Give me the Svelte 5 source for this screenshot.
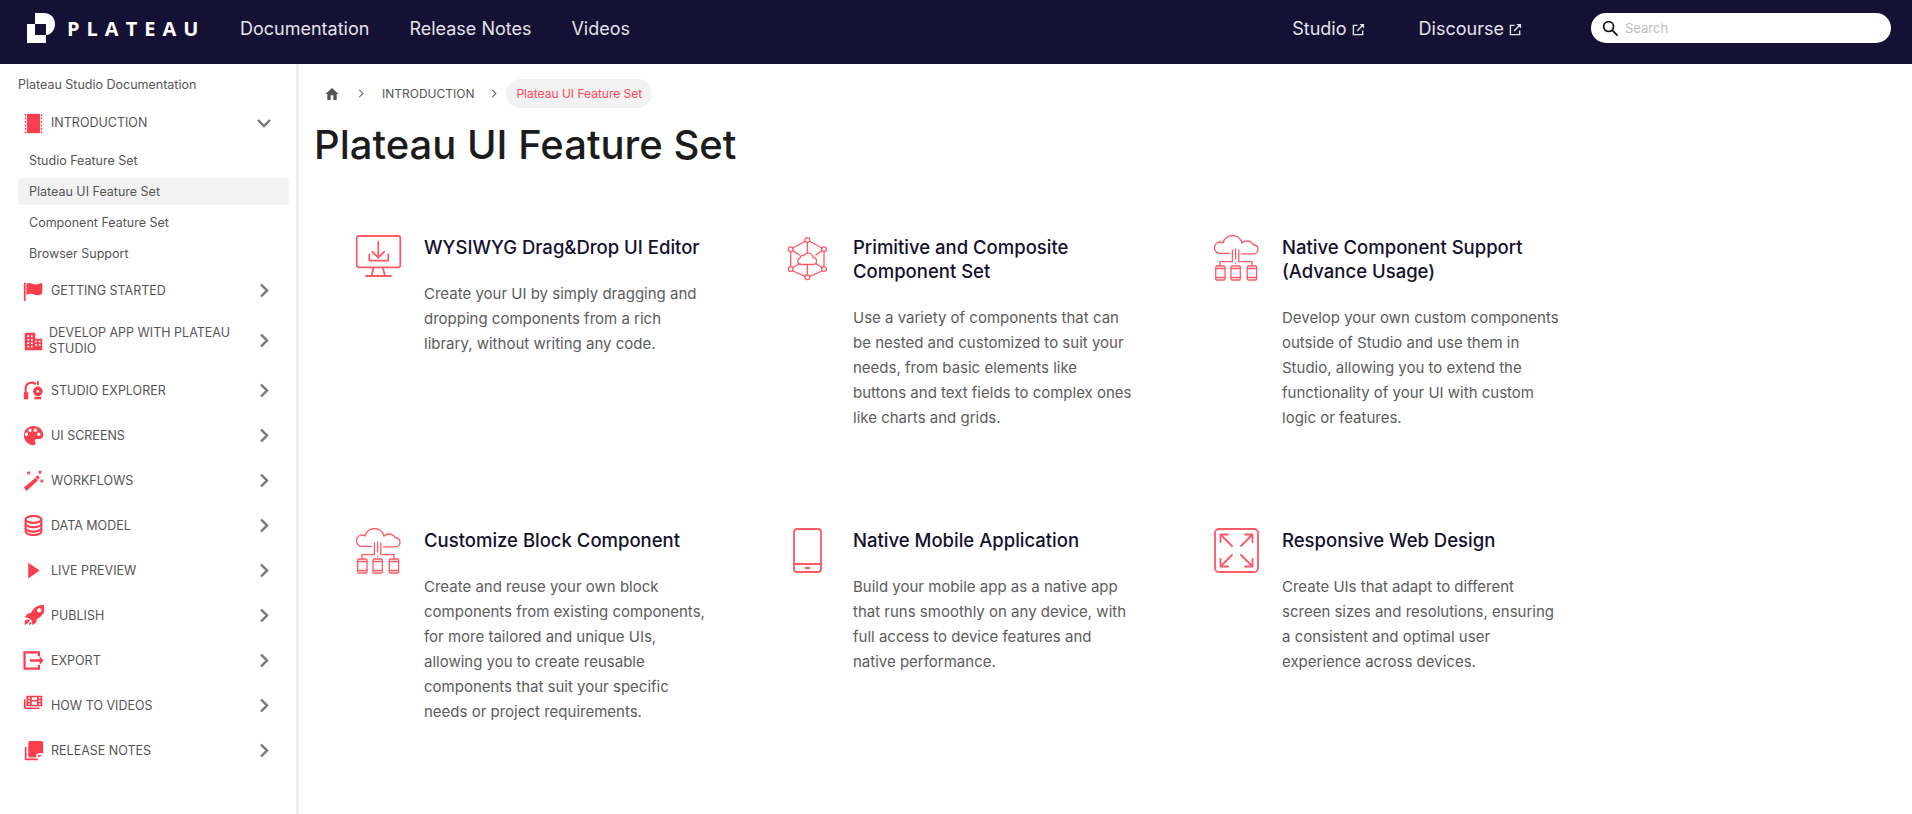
<script>
  const nav = ['Documentation', 'Release Notes', 'Videos'];
  const subItems = ['Studio Feature Set', 'Plateau UI Feature Set', 'Component Feature Set', 'Browser Support'];

  const sections = [
    { id: 'flag', label: 'GETTING STARTED' },
    { id: 'building', label: 'DEVELOP APP WITH PLATEAU STUDIO', tall: true },
    { id: 'headset', label: 'STUDIO EXPLORER' },
    { id: 'palette', label: 'UI SCREENS' },
    { id: 'wand', label: 'WORKFLOWS' },
    { id: 'database', label: 'DATA MODEL' },
    { id: 'play', label: 'LIVE PREVIEW' },
    { id: 'rocket', label: 'PUBLISH' },
    { id: 'export', label: 'EXPORT' },
    { id: 'videos', label: 'HOW TO VIDEOS' },
    { id: 'notes', label: 'RELEASE NOTES' }
  ];

  const features = [
    {
      icon: 'monitor',
      title: 'WYSIWYG Drag&Drop UI Editor',
      body: 'Create your UI by simply dragging and dropping components from a rich library, without writing any code.'
    },
    {
      icon: 'hex',
      title: 'Primitive and Composite Component Set',
      body: 'Use a variety of components that can be nested and customized to suit your needs, from basic elements like buttons and text fields to complex ones like charts and grids.'
    },
    {
      icon: 'cloud',
      title: 'Native Component Support (Advance Usage)',
      body: 'Develop your own custom components outside of Studio and use them in Studio, allowing you to extend the functionality of your UI with custom logic or features.'
    },
    {
      icon: 'cloud',
      title: 'Customize Block Component',
      body: 'Create and reuse your own block components from existing components, for more tailored and unique UIs, allowing you to create reusable components that suit your specific needs or project requirements.'
    },
    {
      icon: 'phone',
      title: 'Native Mobile Application',
      body: 'Build your mobile app as a native app that runs smoothly on any device, with full access to device features and native performance.'
    },
    {
      icon: 'expand',
      title: 'Responsive Web Design',
      body: 'Create UIs that adapt to different screen sizes and resolutions, ensuring a consistent and optimal user experience across devices.'
    }
  ];
</script>

{#snippet external()}
  <svg class="ext" viewBox="0 0 14 14" width="13" height="13" fill="none" stroke="currentColor" stroke-width="1.5">
    <path d="M6 2.500H1.500v10h10V8" />
    <path d="M5.500 8.500 12 2" />
    <path d="M8 1h5v5z" fill="currentColor" stroke="none" />
  </svg>
{/snippet}

{#snippet chevron()}
  <svg class="chev" viewBox="0 0 11 15" width="11" height="15" fill="none" stroke="#757575" stroke-width="2.400">
    <path d="M2 1.500l6 6-6 6" />
  </svg>
{/snippet}

{#snippet sideIcon(id)}
  <svg class="side-icon" viewBox="0 0 24 24" width="24" height="24" fill="#fa3e4e">
    {#if id === 'film'}
      <path d="M4.500 1h15v22h-15z" />
      <path d="M2 1h1.600v2H2zM2 5h1.600v2H2zM2 9h1.600v2H2zM2 13h1.600v2H2zM2 17h1.600v2H2zM2 21h1.600v2H2zM20.400 1H22v2h-1.600zM20.400 5H22v2h-1.600zM20.400 9H22v2h-1.600zM20.400 13H22v2h-1.600zM20.400 17H22v2h-1.600zM20.400 21H22v2h-1.600z" />
    {:else if id === 'flag'}
      <path d="M1 3h2v21H1z" />
      <path d="M4 4c4-2 7 1 10 1s5-1 8-2v13c-3 1-5 2-8 1S8 15 4 17z" />
    {:else if id === 'building'}
      <path fill-rule="evenodd" d="M2 3h12v7h8v13H2zM5 6v2h2V6zm4 0v2h2V6zM5 10v2h2v-2zm4 0v2h2v-2zm5 2v2h2v-2zm4 0v2h2v-2zM5 14v2h2v-2zm4 0v2h2v-2zm5 2v2h2v-2zm4 0v2h2v-2zM5 18v2h2v-2zm4 0v2h2v-2z" />
    {:else if id === 'headset'}
      <path d="M1 14h5v8H1z" />
      <path fill="none" stroke="#fa3e4e" stroke-width="2.400" d="M3 15V10a7 7 0 0 1 12-5" />
      <circle cx="17" cy="13" r="5.500" />
      <circle cx="17" cy="13" r="1.600" fill="#fff" />
      <path d="M13 19h8v3h-8zM16 1h2v5h-2z" />
    {:else if id === 'palette'}
      <path fill-rule="evenodd" d="M12 1C5 1 1 6 1 12s5 11 11 11c2.500 0 3-2 2-3.500s-.5-3.500 2-3.500h3c2.500 0 4-2 4-5 0-6-5-10-11-10zM6 10.500a2 2 0 1 0 0 .1zM10 6a2 2 0 1 0 0 .1zM16 6a2 2 0 1 0 0 .1zM20 10.500a2 2 0 1 0 0 .1z" />
    {:else if id === 'wand'}
      <path d="M1 20 14 9l3 3L4 24z" />
      <path d="M14 8l3-2 2 3-2 2z" />
      <path fill="none" stroke="#fa3e4e" stroke-width="1.300" d="M5 2l3 3M8 2 5 5M18 1l3 3M21 1l-3 3M20 11l3 3M23 11l-3 3" />
    {:else if id === 'database'}
      <path d="M3 5c0-2 4-4 9-4s9 2 9 4-4 4-9 4-9-2-9-4z" fill="none" stroke="#fa3e4e" stroke-width="2.400" />
      <path d="M3 5v14c0 2 4 4 9 4s9-2 9-4V5" fill="none" stroke="#fa3e4e" stroke-width="2.400" />
      <path d="M3 10c0 2 4 4 9 4s9-2 9-4M3 15c0 2 4 4 9 4s9-2 9-4" fill="none" stroke="#fa3e4e" stroke-width="2.400" />
    {:else if id === 'play'}
      <path d="M6 3l13 9-13 9z" />
    {:else if id === 'rocket'}
      <path d="M23 0c-6 0-11 3-14 9l-4 1-3 4 5 1 3 3 1 5 4-3 1-4c6-3 9-8 10-14zM16 6a2.500 2.500 0 1 1 0 .1z" fill-rule="evenodd" />
      <path d="M2 18l4-2 2 2-3 3-3 2zM7 21l2-2 1 2-3 2z" />
    {:else if id === 'export'}
      <path d="M17 7V4H3v16h14v-3h2.500v5.500H.5v-21h19V7z" />
      <path d="M8 10.500h11V7l4.500 5-4.500 5v-3.500H8z" />
    {:else if id === 'videos'}
      <g transform="matrix(1 0 0 .79 0 .2)">
        <path fill-rule="evenodd" d="M4 1h18v15H4zM6 3v2h2V3zm0 4v3h2V7zm0 5v2h2v-2zM18 3v2h2V3zm0 4v3h2V7zm0 5v2h2v-2zM10 3v4h6V3zm0 6v5h6V9z" />
        <path d="M1 6h2v12h16v2H3c-1.500 0-2-.5-2-2z" />
      </g>
    {:else if id === 'notes'}
      <path d="M8 1h13c1 0 2 1 2 2v12h-5c-2 0-3 1-3 3v2H8c-1 0-2-1-2-2V3c0-1 1-2 2-2z" />
      <path d="M17 20v-3h5z" />
      <path d="M2 8h2v13h13v2H4c-1.500 0-2-.5-2-2z" />
    {/if}
  </svg>
{/snippet}

{#snippet featureIcon(id)}
  <svg class="f-icon" viewBox="0 0 46 46" width="46" height="46" fill="none" stroke="#fd5a68" stroke-width="1.800" stroke-linejoin="round" stroke-linecap="round">
    {#if id === 'monitor'}
      <rect x=".7" y="1" width="43.600" height="31.300" rx="2" />
      <path d="M22.300 6.700v16M16.300 16.700l6 6 6-6M13.300 19.300v6.400h19v-6.400" />
      <path d="M17.300 32.300l-1.600 8.700M26.700 32.300l2.300 8.700M10 41h25" />
    {:else if id === 'hex'}
      <g stroke-width="1.300">
        <path d="M20 6.200 8 13M24.700 6.200 36.800 13M5.700 17v14.500M39 17v14.500M8 36l12 5.300M36.800 36l-12 5.300M22.300 7.500v10.800M22.300 29.500v10.500M8 15.600l6.600 4.400M36.800 15.600 31 20M8 32.500l7-4M36.800 32.500l-6-4" />
        <circle cx="22.300" cy="5" r="2.400" />
        <circle cx="5.700" cy="14.300" r="2.400" />
        <circle cx="39" cy="14.300" r="2.400" />
        <circle cx="5.700" cy="34" r="2.400" />
        <circle cx="39" cy="34" r="2.400" />
        <circle cx="22.300" cy="42.300" r="2.400" />
        <path d="M17 29.500h11c2 0 3.500-1.500 3.500-3.500s-1.500-3.300-3.300-3.300c-.2-2.500-2.500-4.500-5-4.500-2 0-3.500 1-4.500 2.500-.8-.3-1.500-.3-2 0-1 .4-1.500 1.500-1.500 2.300-1.500.3-2.500 1.500-2.500 3 0 2 1.500 3.500 3.300 3.500z" />
      </g>
    {:else if id === 'cloud'}
      <g stroke-width="1.300">
        <path d="M15.500 18.300H6C2.500 18.300.5 15.500.5 12.500S3 7 6 7c1 0 2 .3 3 1 1-4.500 5-7.500 9.500-7.500 5 0 8.500 3.500 9.500 7.500 1.500-1.500 3.500-2 5-2 2.500 0 5 1.500 6 3.500 3 .3 5 2.500 5 5 0 2.800-2.500 4.300-5 4.300H27.500" />
        <path d="M18.400 15v11.700H6V31M24.800 15v11.700H38V31M21.600 14v10M21.600 28.200v.3" />
        <rect x="1.700" y="31" width="9.300" height="14" rx="1.200" />
        <rect x="17" y="31" width="9.300" height="14" rx="1.200" />
        <rect x="33.300" y="31" width="9.300" height="14" rx="1.200" />
        <path d="M1.700 33.500H11M17 33.500h9.300M33.300 33.500h9.300M1.700 42.500H11M17 42.500h9.300M33.300 42.500h9.300" />
      </g>
    {:else if id === 'phone'}
      <rect x="9" y="1" width="27" height="43" rx="3" />
      <path d="M9 36h27M20.500 40h4" />
    {:else if id === 'expand'}
      <rect x="1" y="1" width="43" height="43" rx="4" />
      <path d="M6.500 6.500 18 18M6.500 6.500v7.500M6.500 6.500h7.500M38.500 6.500 27 18M38.500 6.500v7.500M38.500 6.500H31M6.500 38.500 18 27M6.500 38.500V31M6.500 38.500h7.500M38.500 38.500 27 27M38.500 38.500V31M38.500 38.500H31" />
    {/if}
  </svg>
{/snippet}

<div class="page">
  <header class="topbar">
    <a class="logo" href="#top">
      <svg viewBox="0 0 29 30" width="29" height="30" fill="#fff">
        <path d="M8 0h9c7 0 11 5 11 11 0 6-4 11-9 11V11H8z" />
        <path d="M0 11h8v11h11v8H0z" />
      </svg>
      <span class="wordmark">PLATEAU</span>
    </a>
    <nav class="main-nav">
      {#each nav as item}
        <a href="#top">{item}</a>
      {/each}
    </nav>
    <div class="links">
      <a href="#top">Studio {@render external()}</a>
      <a href="#top">Discourse {@render external()}</a>
    </div>
    <label class="search">
      <svg viewBox="0 0 18 18" width="17" height="17" fill="none" stroke="#111" stroke-width="1.800">
        <circle cx="7" cy="7" r="5.200" />
        <path d="M11 11l5.500 5.500" />
      </svg>
      <input type="text" placeholder="Search" />
    </label>
  </header>

  <div class="body">
    <aside class="sidebar">
      <div class="doc-title">Plateau Studio Documentation</div>
      <div class="row open">
        {@render sideIcon('film')}
        <span class="label">INTRODUCTION</span>
        <svg class="chev" viewBox="0 0 16 11" width="16" height="11" fill="none" stroke="#757575" stroke-width="2.400">
          <path d="M2 2l6 6 6-6" />
        </svg>
      </div>
      <ul class="subs">
        {#each subItems as item, i}
          <li class:active={i === 1}>{item}</li>
        {/each}
      </ul>
      {#each sections as s}
        <div class="row" class:tall={s.tall}>
          {@render sideIcon(s.id)}
          <span class="label">{s.label}</span>
          {@render chevron()}
        </div>
      {/each}
    </aside>

    <main class="content">
      <div class="crumbs">
        <svg viewBox="0 0 24 24" width="16" height="16" fill="#555"><path d="M10 21v-7h4v7h5v-9h3L12 3 2 12h3v9z" /></svg>
        <svg class="sep" viewBox="0 0 8 12" width="6" height="9" fill="none" stroke="#555" stroke-width="1.400"><path d="M1.500 1l5 5-5 5" /></svg>
        <span class="crumb">INTRODUCTION</span>
        <svg class="sep" viewBox="0 0 8 12" width="6" height="9" fill="none" stroke="#555" stroke-width="1.400"><path d="M1.500 1l5 5-5 5" /></svg>
        <span class="pill">Plateau UI Feature Set</span>
      </div>
      <h1>Plateau UI Feature Set</h1>
      <div class="grid">
        {#each features as f}
          <article class="card">
            <div class="icon-cell">{@render featureIcon(f.icon)}</div>
            <div class="text">
              <h3>{f.title}</h3>
              <p>{f.body}</p>
            </div>
          </article>
        {/each}
      </div>
    </main>
  </div>
</div>

<style>
  :global(body) {
    margin: 0;
    background: #fff;
    font-family: Inter, "Liberation Sans", sans-serif;
  }

  a {
    color: inherit;
    text-decoration: none;
  }

  .page {
    height: 814px;
    overflow: hidden;
  }

  .topbar {
    height: 64px;
    background: #141135;
    display: flex;
    align-items: center;
    box-sizing: border-box;
    padding: 0 21px 8px 27px;
    color: #e3e3e8;
  }

  .logo {
    display: flex;
    align-items: center;
    gap: 11px;
    width: 213px;
  }

  .wordmark {
    font-family: "Open Sans", sans-serif;
    font-weight: 700;
    font-size: 20px;
    letter-spacing: 7px;
    color: #fff;
  }

  .main-nav {
    display: flex;
    gap: 40px;
    font-size: 18px;
    flex: 1;
  }

  .links {
    display: flex;
    gap: 54px;
    font-size: 18px;
    margin-right: 69px;
  }

  .ext {
    vertical-align: -1px;
  }

  .search {
    width: 300px;
    height: 30px;
    background: #fff;
    border-radius: 15px;
    display: flex;
    align-items: center;
    gap: 6px;
    padding-left: 11px;
    box-sizing: border-box;
  }

  .search input {
    border: 0;
    outline: 0;
    padding: 0;
    flex: 1;
    min-width: 0;
    font: 13px Inter, sans-serif;
    background: transparent;
  }

  .search input::placeholder {
    color: #bdbdbd;
  }

  .body {
    display: flex;
  }

  .sidebar {
    height: 750px;
    box-sizing: border-box;
    border-right: 3px solid #eee;
    width: 299px;
    padding: 12px 7px 0 18px;
    color: #555;
    flex: none;
    font-size: 12.5px;
  }

  .doc-title {
    line-height: 18px;
    margin-bottom: 10px;
  }

  .row {
    display: flex;
    align-items: center;
    height: 45px;
    line-height: 16px;
    padding-left: 5px;
  }

  .row.open {
    height: 38px;
  }

  .row.tall {
    height: 55px;
  }

  .row.tall .label {
    margin-left: -2px;
    padding-right: 8px;
  }

  .side-icon {
    width: 21px;
    height: 21px;
    flex: none;
    margin-right: 7px;
  }

  .label {
    flex: 1;
  }

  .chev {
    flex: none;
    margin-right: 19px;
  }

  .row.open .chev {
    margin-right: 17px;
  }

  .subs {
    list-style: none;
    margin: 0 0 1px;
    padding: 1px 0 0;
  }

  .subs li {
    height: 27px;
    line-height: 27px;
    padding-left: 11px;
    margin-top: 4px;
    border-radius: 3px;
  }

  .subs li.active {
    background: #f2f2f2;
  }

  .content {
    flex: 1;
    min-width: 0;
    padding: 15px 0 0 16px;
  }

  .crumbs {
    display: flex;
    align-items: center;
    height: 29px;
    font-size: 12px;
    color: #555;
    padding-left: 9px;
  }

  .sep {
    margin: 0 18px 0 18px;
  }

  .crumb {
    margin-right: -1px;
  }

  .pill {
    background: #f2f2f2;
    color: #fa4a5c;
    border-radius: 15px;
    line-height: 29px;
    padding: 0 10px;
    margin-left: -9px;
  }

  h1 {
    margin: 13px 0 0 -1px;
    font-size: 40px;
    font-weight: 500;
    line-height: 48px;
    color: #1c1c1c;
  }

  .grid {
    display: grid;
    grid-template-columns: 429px 429px 428px;
    margin-top: 66px;
    margin-left: 25px;
  }

  .card {
    display: flex;
    height: 293px;
  }

  .icon-cell {
    width: 84px;
    flex: none;
    padding-left: 16px;
    box-sizing: border-box;
  }

  .f-icon {
    display: block;
  }

  .text {
    width: 281px;
  }

  h3 {
    margin: 0 0 22px;
    font-size: 18.5px;
    font-weight: 500;
    line-height: 24px;
    color: #14112e;
  }

  p {
    margin: 0;
    font-size: 15px;
    line-height: 25px;
    color: #5c5c5c;
  }
</style>
